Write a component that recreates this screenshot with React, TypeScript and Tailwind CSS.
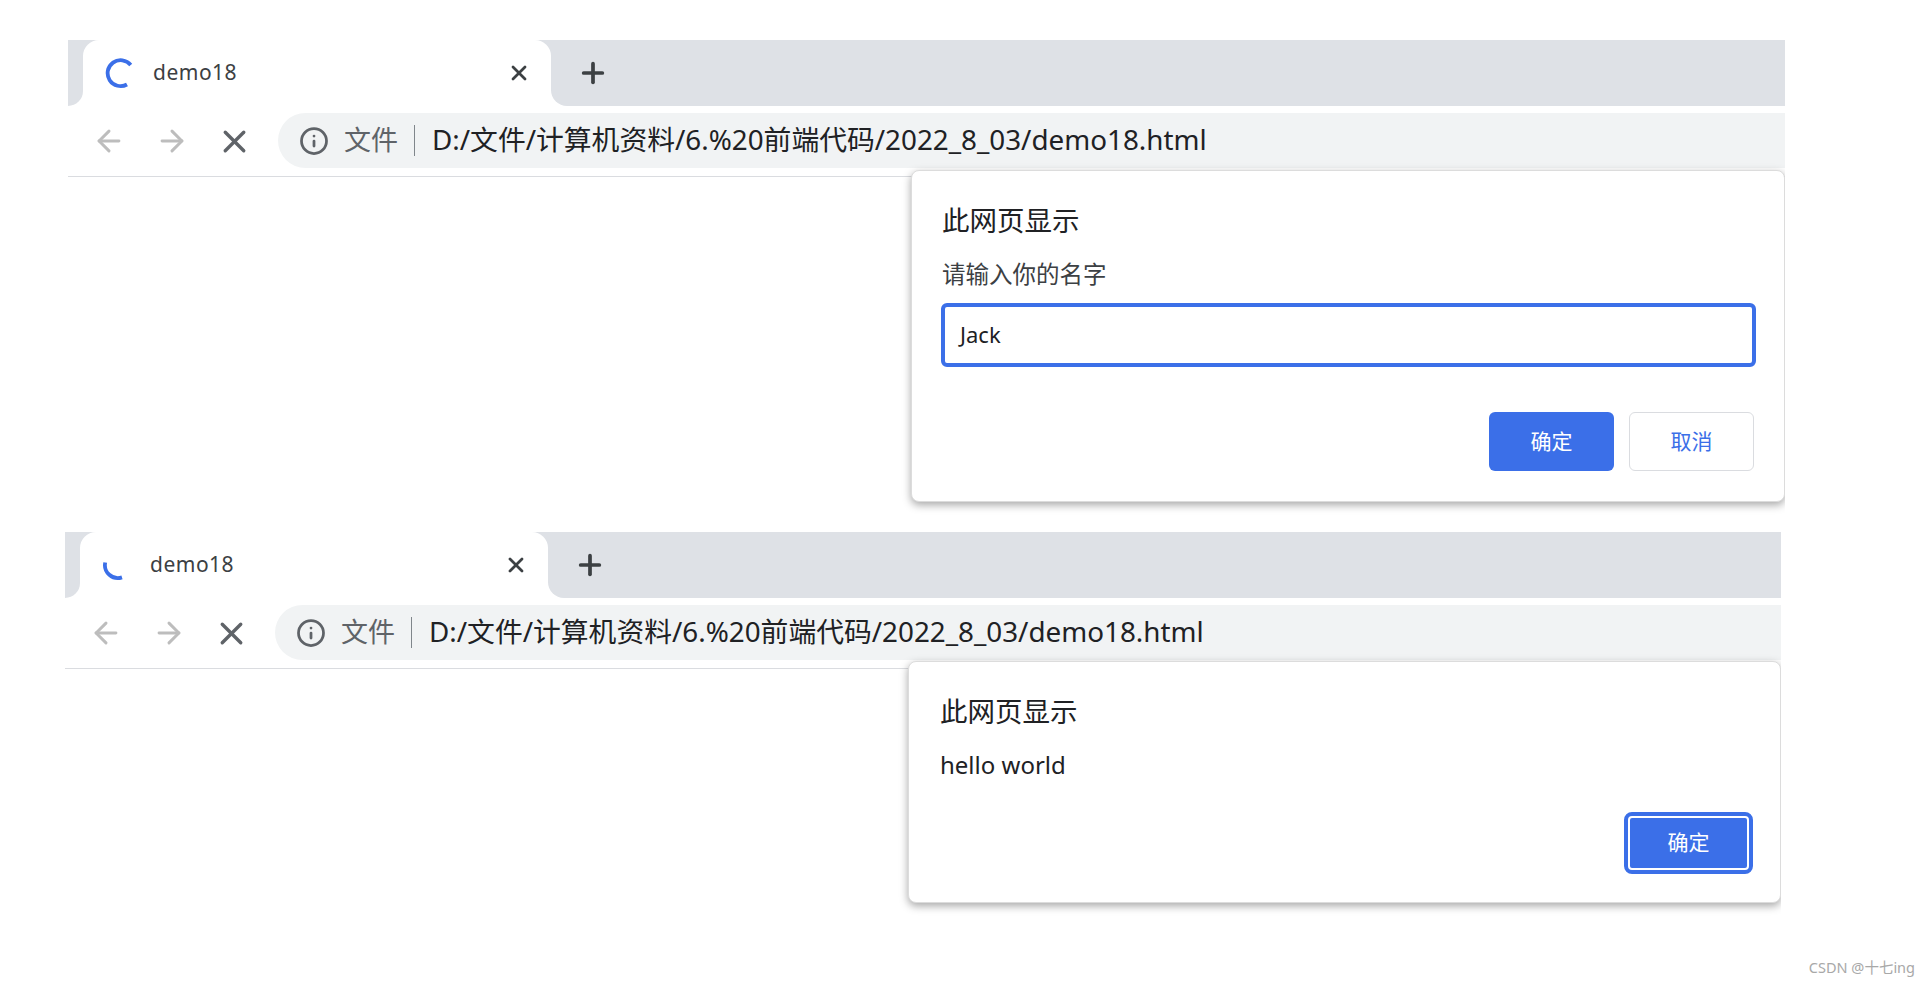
import React from 'react';
import { ArrowLeft, ArrowRight, Info, Plus, X } from 'lucide-react';

const FONT = "font-['Noto_Sans','Noto_Sans_CJK_SC',sans-serif]";
const URL = 'D:/文件/计算机资料/6.%20前端代码/2022_8_03/demo18.html';

function Spinner({ partial }: { partial?: boolean }) {
  return (
    <svg width="32" height="32" viewBox="0 0 32 32" fill="none" className="shrink-0">
      {partial ? (
        <path d="M3.2 13.5A13 13 0 0 0 20 28.4" stroke="#3b6fe8" strokeWidth="3.8" />
      ) : (
        <path d="M25.75 8A13 13 0 1 0 22 27.5" stroke="#3b6fe8" strokeWidth="3.8" />
      )}
    </svg>
  );
}

function BrowserChrome({ partial }: { partial?: boolean }) {
  return (
    <>
      {/* Tab strip */}
      <div className="flex h-[66px] shrink-0">
        <div className="w-[15px] bg-[#dee1e6] rounded-br-[16px]" />
        <div className="w-[468px] bg-[linear-gradient(#dee1e6_50%,white_50%)]">
          <div className="h-full bg-white rounded-t-[16px] flex items-center pl-[22px] pr-[20px]">
            <Spinner partial={partial} />
            <span className="ml-[16px] flex-1 text-[21px] tracking-[0.5px] text-[#3c4043]">demo18</span>
            <X size={24} strokeWidth={2.8} className="text-[#3c4043]" />
          </div>
        </div>
        <div className="flex-1 bg-[#dee1e6] rounded-bl-[16px] flex items-center pl-[26px]">
          <Plus size={32} strokeWidth={2.8} className="text-[#3c4043]" />
        </div>
      </div>
      {/* Toolbar */}
      <div className="flex items-center h-[71px] shrink-0 border-b border-[#dadce0] pl-[24px]">
        <ArrowLeft size={34} strokeWidth={2.1} className="text-[#bdbdbd]" />
        <ArrowRight size={34} strokeWidth={2.1} className="text-[#bdbdbd] ml-[29px]" />
        <X size={37} strokeWidth={2.2} className="text-[#5f6368] ml-[27px]" />
        <div className="ml-[25px] flex-1 h-[55px] -mt-[1px] bg-[#f1f3f4] rounded-l-[28px] flex items-center pl-[21px]">
          <Info size={30} strokeWidth={2.2} className="text-[#5f6368]" />
          <span className="ml-[15px] text-[27px] text-[#5f6368]">文件</span>
          <span className="ml-[16px] w-px h-[31px] bg-[#80868b]" />
          <span className="ml-[17px] -mt-[2px] text-[27.8px] text-[#202124] whitespace-nowrap">{URL}</span>
        </div>
      </div>
    </>
  );
}

function PromptWindow() {
  return (
    <div className="relative w-[1717px] h-[490px] overflow-hidden shrink-0">
      <BrowserChrome />
      <div className="absolute left-[843px] right-0 top-[130px] h-[332px] bg-white rounded-[8px] border border-[#dcdcdc] shadow-[0_3px_8px_rgba(0,0,0,0.35)] pt-[32px] pl-[30px] pr-[30px]">
        <div className="text-[27.5px] leading-[36px] text-[#202124]">此网页显示</div>
        <div className="mt-[19px] text-[23.5px] leading-[32px] text-[#3c4043]">请输入你的名字</div>
        <div className="mt-[13px] -ml-[1px] -mr-[2px] h-[64px] border-[4px] border-[#3b6fe8] rounded-[6px] flex items-center pb-[2px] pl-[15px] text-[22px] text-[#202124]">
          Jack
        </div>
        <div className="mt-[45px] flex justify-end gap-[15px]">
          <div className="w-[125px] h-[59px] rounded-[6px] bg-[#3b6fe8] text-white text-[21px] flex items-center justify-center">确定</div>
          <div className="w-[125px] h-[59px] rounded-[6px] bg-white border border-[#dadce0] text-[#3b6fe8] text-[21px] flex items-center justify-center">取消</div>
        </div>
      </div>
    </div>
  );
}

function AlertWindow() {
  return (
    <div className="relative w-[1716px] h-[395px] overflow-hidden shrink-0">
      <BrowserChrome partial />
      <div className="absolute left-[843px] right-0 top-[129px] h-[242px] bg-white rounded-[8px] border border-[#dcdcdc] shadow-[0_3px_8px_rgba(0,0,0,0.35)] pt-[32px] pl-[31px] pr-[27px]">
        <div className="text-[27.5px] leading-[36px] text-[#202124]">此网页显示</div>
        <div className="mt-[17px] text-[24px] leading-[36px] text-[#202124]">hello world</div>
        <div className="mt-[29px] flex justify-end">
          <div className="w-[129px] h-[62px] rounded-[8px] bg-[#3b6fe8] border-[4px] border-[#3b6fe8] outline-2 -outline-offset-[6px] outline-white text-white text-[21px] flex items-center justify-center">
            确定
          </div>
        </div>
      </div>
    </div>
  );
}

export default function App() {
  return (
    <div className={`relative w-[1930px] h-[987px] overflow-hidden bg-white pt-[40px] flex flex-col ${FONT}`}>
      <div className="ml-[68px]">
        <PromptWindow />
      </div>
      <div className="ml-[65px] mt-[2px]">
        <AlertWindow />
      </div>
      {/* Watermark */}
      <span className="absolute right-[15px] bottom-[8px] text-[14.5px] text-[#a8a8a8]">CSDN @十七ing</span>
    </div>
  );
}
